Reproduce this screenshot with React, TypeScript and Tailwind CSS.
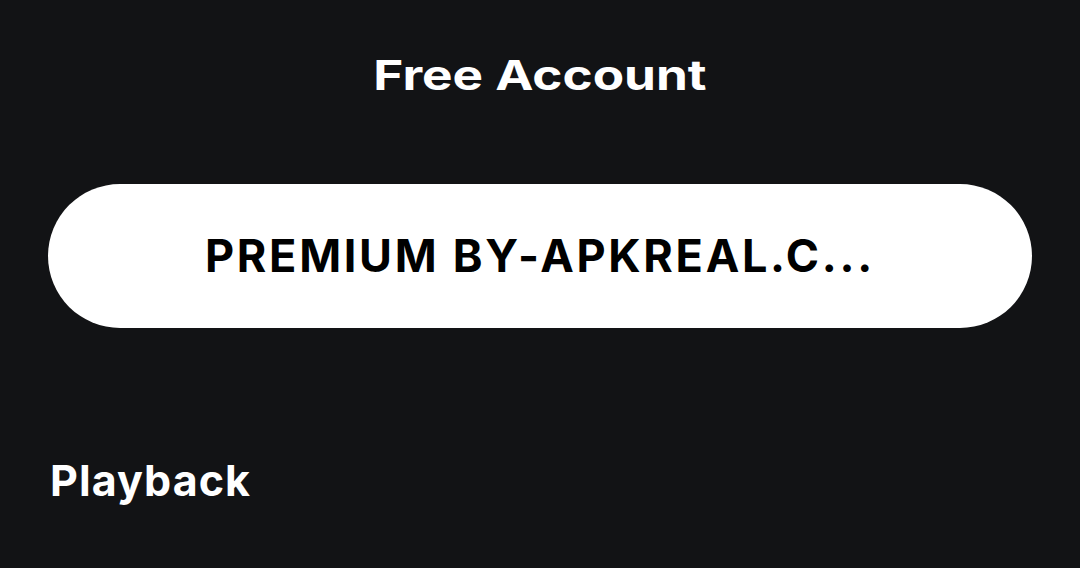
export default function App() {
  return (
    <div
      className="h-[568px] w-[1080px] overflow-hidden bg-[#121315] text-white"
      style={{ fontFamily: "Inter, 'Noto Sans', sans-serif" }}
    >
      <h1 className="scale-x-[1.25] pt-[45px] text-center text-[41px] font-bold leading-[60px]">
        Free Account
      </h1>

      {/* Plan button */}
      <div className="px-12 pt-[79px]">
        <button className="flex h-[144px] w-full items-center justify-center rounded-full bg-white text-[45px] font-bold tracking-[0.06em] text-black">
          PREMIUM BY-APKREAL.C...
        </button>
      </div>

      {/* Settings section */}
      <h2 className="px-[50px] pt-[122px] text-[43px] font-bold leading-[60px] tracking-[0.025em]">
        Playback
      </h2>
    </div>
  );
}
